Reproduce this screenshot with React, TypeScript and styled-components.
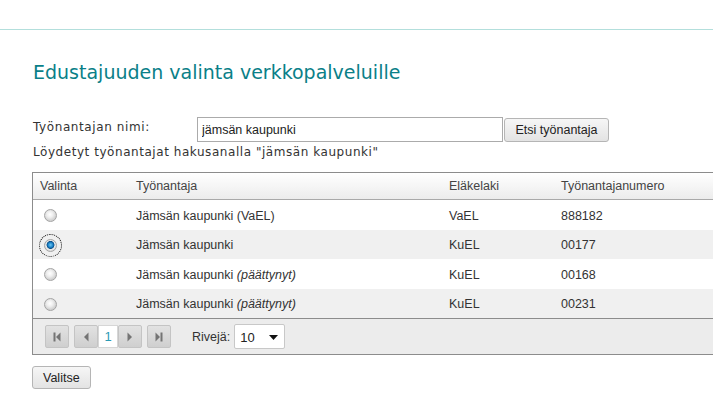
import React from "react";
import styled, { createGlobalStyle } from "styled-components";

const Global = createGlobalStyle`
  html, body { margin: 0; padding: 0; background: #fff; overflow: hidden; }
  body { font-family: "Liberation Sans", Arial, sans-serif; color: #333; }
`;

const TopBar = styled.div`
  height: 29px;
  border-bottom: 1px solid #b3dfdc;
`;

const Content = styled.div`
  padding-left: 32px;
`;

const Title = styled.h1`
  margin: 30px 0 0 1px;
  font-family: "DejaVu Sans", Verdana, sans-serif;
  font-weight: normal;
  font-size: 19px;
  line-height: 24px;
  color: #0a7f88;
`;

const FormRow = styled.div`
  display: flex;
  align-items: flex-start;
  margin-top: 33px;
  height: 25px;
`;

const Label = styled.label`
  width: 164px;
  padding-left: 1px;
  font-family: "DejaVu Sans", Verdana, sans-serif;
  font-size: 12px;
  letter-spacing: 0.6px;
  line-height: 16px;
  margin-top: 2px;
  color: #333;
`;

const TextInput = styled.input`
  box-sizing: border-box;
  width: 306px;
  height: 25px;
  border: 1px solid #ababab;
  padding: 0 4px;
  font-family: "Liberation Sans", Arial, sans-serif;
  font-size: 12.5px;
  color: #222;
  outline: none;
`;

const Button = styled.button<{ $h?: number }>`
  box-sizing: border-box;
  height: ${(p) => p.$h ?? 24}px;
  padding: 0 10px;
  border: 1px solid #b5b5b5;
  border-radius: 3px;
  background: linear-gradient(#f6f6f6, #e3e3e3);
  font-family: "Liberation Sans", Arial, sans-serif;
  font-size: 12.5px;
  color: #222;
`;

const SearchButton = styled(Button)`
  margin-top: 1px;
  margin-left: 1px;
  width: 105px;
  padding: 0;
`;

const FoundText = styled.div`
  margin-top: 2px;
  padding-left: 1px;
  font-family: "DejaVu Sans", Verdana, sans-serif;
  font-size: 12px;
  letter-spacing: 0.55px;
  line-height: 16px;
  color: #333;
`;

const Table = styled.div`
  margin-top: 12px;
  width: 720px;
  border: 1px solid #8c8c8c;
  border-right: none;
  font-family: "Liberation Sans", Arial, sans-serif;
  font-size: 12.5px;
  color: #333;
`;

const Row = styled.div<{ $alt?: boolean; $head?: boolean }>`
  display: grid;
  grid-template-columns: 96px 313px 112px 1fr;
  align-items: center;
  padding-left: 7px;
  padding-top: ${(p) => (p.$head ? 0 : 2)}px;
  box-sizing: border-box;
  height: ${(p) => (p.$head ? 27 : 29.5)}px;
  background: ${(p) =>
    p.$head ? "linear-gradient(#ffffff, #ececec)" : p.$alt ? "#f0f0f0" : "#ffffff"};
  border-bottom: ${(p) => (p.$head ? "1px solid #a9a9a9" : "none")};
  color: ${(p) => (p.$head ? "#444" : "#333")};
`;

const Body = styled.div`
  border-bottom: 1px solid #8c8c8c;
`;

const RadioCell = styled.div`
  display: flex;
  align-items: center;
  padding-left: 4px;
`;

const Radio = styled.span<{ $checked?: boolean; $focus?: boolean }>`
  display: inline-block;
  box-sizing: border-box;
  width: 13px;
  height: 13px;
  border-radius: 50%;
  border: 1px solid #a4a4a4;
  background: ${(p) =>
    p.$checked
      ? "radial-gradient(circle at 50% 45%, #6cc8f2 0, #1a80c6 2.5px, #0b4f86 3.6px, #ededed 4.3px, #dadada 6px)"
      : "radial-gradient(circle at 45% 40%, #ffffff 0, #efefef 3px, #d2d2d2 6px)"};
  outline: ${(p) => (p.$focus ? "1px dotted #111" : "none")};
  outline-offset: 4px;
`;

const Italic = styled.i`
  font-style: italic;
`;

const Pager = styled.div`
  display: flex;
  align-items: center;
  height: 35px;
  padding-left: 12px;
  background: #ececec;
`;

const PageButton = styled.span<{ $gap?: number }>`
  display: flex;
  align-items: center;
  justify-content: center;
  box-sizing: border-box;
  width: 24px;
  height: 23px;
  margin-left: ${(p) => p.$gap ?? 0}px;
  border: 1px solid #c4c4c4;
  border-radius: 2px;
  background: linear-gradient(#e2e2e2, #cfcfcf);
`;

const PageNumber = styled.span`
  display: flex;
  align-items: center;
  justify-content: center;
  box-sizing: border-box;
  width: 20px;
  height: 23px;
  background: #fff;
  border: 1px solid #d6d6d6;
  color: #2b9bb5;
  font-size: 13px;
`;

const RowsLabel = styled.span`
  margin-left: 21px;
  font-size: 12.5px;
  color: #333;
`;

const Select = styled.span`
  display: flex;
  align-items: center;
  justify-content: space-between;
  box-sizing: border-box;
  width: 51px;
  height: 25px;
  margin-left: 4px;
  padding: 2px 6px 0 5px;
  background: #fff;
  border: 1px solid #c8c8c8;
  border-radius: 2px;
  font-size: 13px;
  color: #222;
`;

const Footer = styled.div`
  margin-top: 11px;
`;

const Arrow = ({ kind }: { kind: "first" | "prev" | "next" | "last" }) => {
  const c = "#747474";
  return (
    <svg width="10" height="12" viewBox="0 0 10 12">
      {kind === "first" && (
        <>
          <rect x="1.5" y="1.5" width="2" height="9" fill={c} />
          <polygon points="8.5,1.5 4,6 8.5,10.5" fill={c} />
        </>
      )}
      {kind === "prev" && <polygon points="7.5,1.5 3,6 7.5,10.5" fill={c} />}
      {kind === "next" && <polygon points="2.5,1.5 7,6 2.5,10.5" fill={c} />}
      {kind === "last" && (
        <>
          <polygon points="1.5,1.5 6,6 1.5,10.5" fill={c} />
          <rect x="6.5" y="1.5" width="2" height="9" fill={c} />
        </>
      )}
    </svg>
  );
};

const rows = [
  { name: "Jämsän kaupunki (VaEL)", ended: false, law: "VaEL", num: "888182", checked: false },
  { name: "Jämsän kaupunki", ended: false, law: "KuEL", num: "00177", checked: true },
  { name: "Jämsän kaupunki", ended: true, law: "KuEL", num: "00168", checked: false },
  { name: "Jämsän kaupunki", ended: true, law: "KuEL", num: "00231", checked: false },
];

export default function App() {
  return (
    <>
      <Global />
      <TopBar />
      <Content>
        <Title>Edustajuuden valinta verkkopalveluille</Title>
        <FormRow>
          <Label>Työnantajan nimi:</Label>
          <TextInput defaultValue="jämsän kaupunki" />
          <SearchButton>Etsi työnantaja</SearchButton>
        </FormRow>
        <FoundText>Löydetyt työnantajat hakusanalla "jämsän kaupunki"</FoundText>
        <Table>
          <Row $head>
            <div>Valinta</div>
            <div>Työnantaja</div>
            <div>Eläkelaki</div>
            <div>Työnantajanumero</div>
          </Row>
          <Body>
            {rows.map((r, i) => (
              <Row key={i} $alt={i % 2 === 1}>
                <RadioCell>
                  <Radio $checked={r.checked} $focus={r.checked} />
                </RadioCell>
                <div>
                  {r.name}
                  {r.ended && (
                    <>
                      {" "}
                      <Italic>(päättynyt)</Italic>
                    </>
                  )}
                </div>
                <div>{r.law}</div>
                <div>{r.num}</div>
              </Row>
            ))}
          </Body>
          <Pager>
            <PageButton>
              <Arrow kind="first" />
            </PageButton>
            <PageButton $gap={5}>
              <Arrow kind="prev" />
            </PageButton>
            <PageNumber>1</PageNumber>
            <PageButton>
              <Arrow kind="next" />
            </PageButton>
            <PageButton $gap={5}>
              <Arrow kind="last" />
            </PageButton>
            <RowsLabel>Rivejä:</RowsLabel>
            <Select>
              10
              <svg width="9" height="5" viewBox="0 0 9 5">
                <polygon points="0,0 9,0 4.5,5" fill="#111" />
              </svg>
            </Select>
          </Pager>
        </Table>
        <Footer>
          <Button $h={23}>Valitse</Button>
        </Footer>
      </Content>
    </>
  );
}
